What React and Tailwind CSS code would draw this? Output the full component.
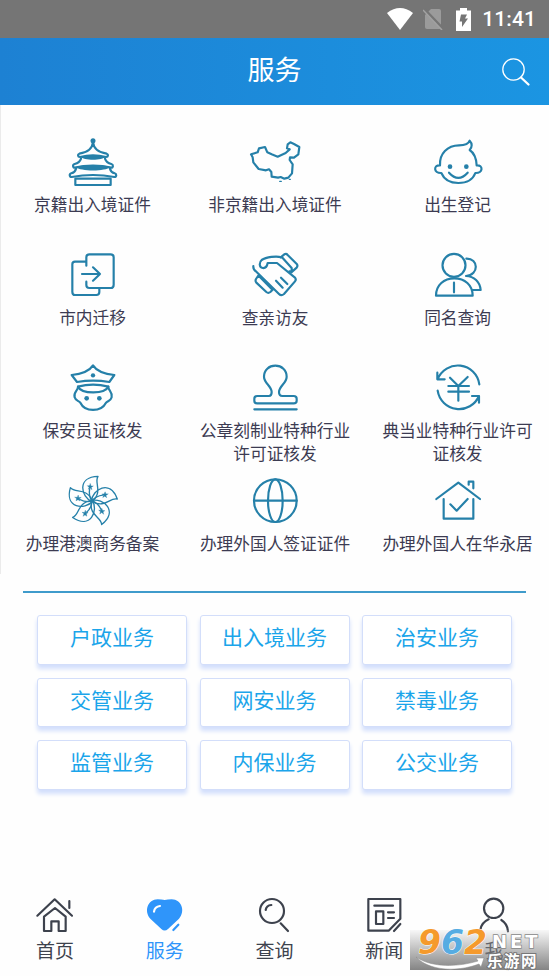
import { useState } from "react";

const icons = {
  temple: (
    <>
      <circle cx="72" cy="8" r="7.5" fill="currentColor" stroke="none" />
      <path d="M72 12 C70 33 52 44 31 47 C25 49 26 56 33 57 C58 51 86 51 111 57 C118 56 119 49 113 47 C92 44 74 33 72 12Z" />
      <path d="M34 56 C58 49 86 49 110 56 C100 68 44 68 34 56Z" fill="currentColor" stroke="none" />
      <path d="M36 62 C33 71 26 76 17 78 C10 80 11 89 18 89 C50 81 94 81 126 89 C133 89 134 80 127 78 C118 76 111 71 108 62" />
      <path d="M20 87 C50 79 94 79 124 87 C110 101 34 101 20 87Z" fill="currentColor" stroke="none" />
      <path d="M21 92 C19 100 14 104 7 106 C0 108 1 117 8 117 C50 109 94 109 136 117 C143 117 144 108 137 106 C130 104 125 100 123 92" />
      <path d="M19 122 H125 V141 H19Z" />
    </>
  ),
  china: (
    <>
      <path d="M0 49 L20 43 L24 31 L42 27 L49 43 L62 49 L80 56 L104 45 L116 34 L108 31 L110 19 L118 13 L129 18 L145 27 L142 49 L129 59 L117 58 L116 66 L125 79 L123 106 L112 119 L100 122 L89 117 L81 119 L62 116 L61 102 L54 94 L45 97 L23 93 L7 73 L5 58Z" />
      <path d="M86 130 h5 M115 124 h3" strokeWidth="4" />
    </>
  ),
  baby: (
    <>
      <path d="M18 82 C16 48 40 22 75 22 C92 22 104 18 107 8 C115 16 115 28 107 36 C122 46 127 62 128 82 C148 80 148 106 124 105 C117 124 98 135 73 135 C48 135 30 124 22 105 C-2 106 -2 80 18 82Z" />
      <path d="M45 104 Q73 135 101 104" />
      <circle cx="48" cy="86" r="7" fill="currentColor" stroke="none" />
      <circle cx="97" cy="86" r="7" fill="currentColor" stroke="none" />
    </>
  ),
  transfer: (
    <>
      <path d="M52 44 V19 Q52 10 61 10 H125 Q134 10 134 19 V101 Q134 111 125 111 H61 Q52 111 52 102 V92" />
      <path d="M51 32 H18 Q10 32 10 40 V122 Q10 132 18 132 H82 Q91 132 91 123 V112" />
      <path d="M39 69 H93 M72 49 L93 69 L72 89" />
    </>
  ),
  handshake: (
    <>
      <path d="M89 19 L100 10 Q106 7 110 12 L138 40 Q141 45 137 50 L121 64 M93 19 L122 51 V64 L115 61" />
      <path d="M90 19 C78 14 45 18 32 27 C24 34 24 50 35 51 C43 52 48 48 50 36 H78 L131 79 Q137 85 132 91 L99 129 Q91 136 84 129 L16 62 Q6 56 7 45" />
      <path d="M75 89 L95 110 M90 80 L109 99" />
      <path d="M22 74 L15 84 Q12 90 16 95 L46 123 Q52 128 58 123 L65 116 M23 74 L62 114" />
    </>
  ),
  people: (
    <>
      <circle cx="60" cy="43" r="34.5" />
      <path d="M6 134 C6 102 30 82 61 82 S116 102 116 134Z" />
      <path d="M60 95 V124" />
      <path d="M97 23 C134 22 136 72 96 75 C120 76 138 92 140 117 H116" />
    </>
  ),
  officer: (
    <>
      <path d="M72 4 C62 20 45 29 8 33 L24 54 Q72 46 121 54 L136 33 C99 29 82 20 72 4Z" />
      <circle cx="72" cy="34" r="6.5" fill="currentColor" stroke="none" />
      <path d="M27 68 Q72 56 118 68 C108 91 38 91 27 68Z" />
      <path d="M27 68 C28 80 12 84 17 100 C20 111 28 109 34 116 C48 145 96 145 111 116 C118 109 125 111 128 100 C132 84 117 80 118 68" />
      <circle cx="53" cy="103" r="7" fill="currentColor" stroke="none" />
      <circle cx="91" cy="103" r="7" fill="currentColor" stroke="none" />
    </>
  ),
  stamp: (
    <>
      <path d="M54 96 H19 Q10 96 10 104 V110 Q10 118 19 118 H128 Q137 118 137 110 V104 Q137 96 128 96 H94 Q84 96 84 84 C84 66 107 58 107 38 C107 18 92 5 73 5 C54 5 39 18 39 38 C39 58 62 66 62 84 Q62 96 54 96" />
      <path d="M10 136 H137" />
    </>
  ),
  yuan: (
    <>
      <path d="M11 46 A65 65 0 0 1 136 61 M10 26 V46 H32" />
      <path d="M11 80 A65 65 0 0 0 135 96 M114 96 H135 V116" />
      <path d="M48 41 L73 66 L101 39 M43 66 H105 M43 83 H105 M73 66 V110" />
    </>
  ),
  globe: (
    <>
      <circle cx="73" cy="71" r="64" />
      <ellipse cx="73" cy="71" rx="22" ry="64" />
      <path d="M9 71 H137" />
    </>
  ),
  house: (
    <>
      <path d="M7 66 L73 17 L138 66" />
      <path d="M29 66 V125 H118 V66" />
      <path d="M104 23 V14 H118 V34" />
      <path d="M49 82 L68 101 L101 66" />
    </>
  ),
};

const services = [
  { label: "京籍出入境证件", icon: "temple" },
  { label: "非京籍出入境证件", icon: "china" },
  { label: "出生登记", icon: "baby" },
  { label: "市内迁移", icon: "transfer" },
  { label: "查亲访友", icon: "handshake" },
  { label: "同名查询", icon: "people" },
  { label: "保安员证核发", icon: "officer" },
  { label: "公章刻制业特种行业许可证核发", icon: "stamp" },
  { label: "典当业特种行业许可证核发", icon: "yuan" },
  { label: "办理港澳商务备案", icon: "flower" },
  { label: "办理外国人签证证件", icon: "globe" },
  { label: "办理外国人在华永居", icon: "house" },
];

const business = [
  "户政业务",
  "出入境业务",
  "治安业务",
  "交管业务",
  "网安业务",
  "禁毒业务",
  "监管业务",
  "内保业务",
  "公交业务",
];

const tabs = [
  {
    label: "首页",
    icon: (
      <>
        <path d="M1 53 L53 4 L105 53 M97 9 V30" />
        <path d="M21 99 V56 L54 30 L86 56 V99 H65 V70 H43 V99Z" />
      </>
    ),
  },
  {
    label: "服务",
    icon: (
      <>
        <path
          d="M43 93 L10 62 C-10 40 2 4 32 4 Q44 4 53 6 Q62 4 74 4 C104 4 116 40 96 62 L63 93 Q53 102 43 93Z"
          fill="currentColor"
          stroke="none"
        />
        <path d="M21 41 Q23 26 39 24" stroke="#fff" />
        <path d="M79 96 L94 80" />
      </>
    ),
  },
  {
    label: "查询",
    icon: (
      <>
        <circle cx="48" cy="39" r="36" />
        <path d="M74 76 L96 99 M29 36 Q31 22 46 21" />
      </>
    ),
  },
  {
    label: "新闻",
    icon: (
      <>
        <path d="M7 3 H103 V62 L68 98 H7Z" />
        <path d="M25 23 H81 M66 43 H84 M66 60 H84 M84 99 L103 78" />
        <path d="M30 40 H52 V78 H30Z" />
      </>
    ),
  },
  {
    label: "我",
    icon: (
      <>
        <circle cx="53" cy="31" r="29" />
        <path d="M13 96 Q16 74 38 64 M76 66 Q95 78 96 100" />
      </>
    ),
  },
];

function Flower() {
  return (
    <g strokeWidth="4">
      {[0, 72, 144, 216, 288].map((angle) => (
        <g key={angle} transform={`rotate(${angle} 69 72)`}>
          <path d="M69 74 C36 60 22 0 87 -2 C74 18 104 42 69 74Z" />
          <path d="M69 74 C61 60 59 50 62 36" />
          <path
            d="M64 20 L66 27 L73 27 L67 31 L69 38 L64 34 L58 37 L60 31 L55 26 L61 26Z"
            fill="currentColor"
            strokeWidth="1"
          />
        </g>
      ))}
    </g>
  );
}

function StatusBar() {
  return (
    <div className="flex h-[38px] shrink-0 items-center justify-end bg-[#757575] pr-[13px] text-white">
      <svg viewBox="0 0 26 22" className="mr-2.5 h-[22px] w-[26px]" fill="currentColor">
        <path d="M0 5 Q13 -5 26 5 L13 22Z" />
      </svg>
      <svg viewBox="0 0 20 22" className="mr-[13px] h-[22px] w-5">
        <path d="M8 1 H16 Q18 1 18 3 V19 Q18 21 16 21 H4 Q2 21 2 19 V7Z" fill="#9b9b9b" />
        <path d="M1 1 L20 21" stroke="#757575" strokeWidth="3" />
        <path d="M0 2 L19 22" stroke="#a2a2a2" strokeWidth="1.5" />
      </svg>
      <svg viewBox="0 0 15 23" className="mr-[11px] h-[23px] w-[15px]">
        <path d="M4 0 H11 V2.500 H15 V23 H0 V2.500 H4Z" fill="#fff" />
        <path d="M5 6.500 H11 L9 10.500 H12 L6 19 V13.500 H3.500Z" fill="#757575" />
      </svg>
      <span className="pt-0.5 font-[Roboto] text-[21px] font-medium tracking-[0.1px]">11:41</span>
    </div>
  );
}

function Header() {
  return (
    <header className="grid h-[67px] shrink-0 grid-cols-3 items-center bg-linear-to-r from-[#1d81d3] to-[#1b95e2] text-white">
      <h1 className="col-start-2 pb-1.5 text-center text-[27px] leading-9">服务</h1>
      <svg
        viewBox="0 0 30 30"
        className="mr-[18px] h-[30px] w-[30px] justify-self-end"
        fill="none"
        stroke="currentColor"
        strokeLinecap="round"
      >
        <circle cx="12.500" cy="12.500" r="10.700" strokeWidth="1.300" />
        <path d="M20 20.500 L27.500 27.500" strokeWidth="2.300" />
      </svg>
    </header>
  );
}

function ServiceItem({ label, icon }) {
  return (
    <div className="flex flex-col items-center">
      <svg
        viewBox="0 0 144 144"
        className="h-12 w-12 overflow-visible text-[#2580a9]"
        fill="none"
        stroke="currentColor"
        strokeWidth="6.500"
        strokeLinecap="round"
        strokeLinejoin="round"
      >
        {icon === "flower" ? <Flower /> : icons[icon]}
      </svg>
      <p className="mt-[7px] w-40 text-center text-[16.7px] leading-[23px] text-[#3c3b52]">{label}</p>
    </div>
  );
}

function Watermark() {
  return (
    <div className="absolute top-[930px] left-[410px] h-10 w-[139px] bg-linear-to-b from-[#dddddd]/20 to-[#777777]/90">
      <svg viewBox="0 0 139 40" className="absolute inset-0 h-10 w-[139px]">
        <path
          d="M6 27 C22 38 48 37 68 31 L66 28 L74 28 L71 37 L69 34 C45 43 18 40 6 27Z"
          fill="#fff"
          stroke="#888"
          strokeWidth="0.5"
        />
      </svg>
      <div className="absolute -top-[6px] left-2 font-['DejaVu_Sans'] text-[33px] leading-[38px] font-bold italic [-webkit-text-stroke:1px_#ffffff] [paint-order:stroke_fill]">
        <span className="text-[#f59a2c]">9</span>
        <span className="text-[#56ace2]">6</span>
        <span className="text-[#f59a2c]">2</span>
      </div>
      <div className="absolute top-0 left-[82px] font-['DejaVu_Sans'] text-[18px] leading-6 font-bold tracking-[3px] text-white [-webkit-text-stroke:1.5px_#888888] [paint-order:stroke_fill]">
        NET
      </div>
      <div className="absolute top-[20px] left-[77px] text-[15.5px] leading-5 font-bold tracking-[1.5px] whitespace-nowrap text-white [-webkit-text-stroke:2px_#777777] [paint-order:stroke_fill]">
        乐游网
      </div>
    </div>
  );
}

export default function App() {
  const [active, setActive] = useState("服务");

  return (
    <div className="relative flex h-[976px] w-[549px] flex-col overflow-hidden bg-[#fefefe] font-['Noto_Sans_CJK_SC',sans-serif]">
      <StatusBar />
      <Header />

      {/* Services */}
      <section className="grid h-[469px] shrink-0 auto-rows-[113px] grid-cols-[183px_182px_183px] border-l border-[#ebebeb] pt-[33px]">
        {services.map((service) => (
          <ServiceItem key={service.label} {...service} />
        ))}
      </section>

      <div className="mx-[23px] mt-[17px] h-[1.5px] shrink-0 bg-[#3f9bcb]" />

      {/* Business categories */}
      <section className="mt-[22.5px] grid grid-cols-3 gap-x-[12.5px] gap-y-[13px] pr-[37px] pl-[37px]">
        {business.map((name) => (
          <button
            key={name}
            className="h-[49.5px] rounded-[3px] border border-[#d3defa] bg-white pb-[7px] text-[21px] leading-[30px] text-[#1ba5ea] shadow-[0_4px_4px_#d3dffc]"
          >
            {name}
          </button>
        ))}
      </section>

      {/* Tab bar */}
      <nav className="mt-auto grid h-[78px] shrink-0 grid-cols-5">
        {tabs.map((tab) => (
          <button
            key={tab.label}
            onClick={() => setActive(tab.label)}
            className={`flex flex-col items-center ${
              active === tab.label ? "text-[#2f95fa]" : "text-[#3d424d]"
            }`}
          >
            <svg
              viewBox="0 0 108 108"
              className="h-9 w-9 shrink-0 overflow-visible"
              fill="none"
              stroke="currentColor"
              strokeWidth="6.500"
              strokeLinecap="round"
              strokeLinejoin="round"
            >
              {tab.icon}
            </svg>
            <span className="mt-0.5 text-[19px] leading-7">{tab.label}</span>
          </button>
        ))}
      </nav>

      <Watermark />
    </div>
  );
}
